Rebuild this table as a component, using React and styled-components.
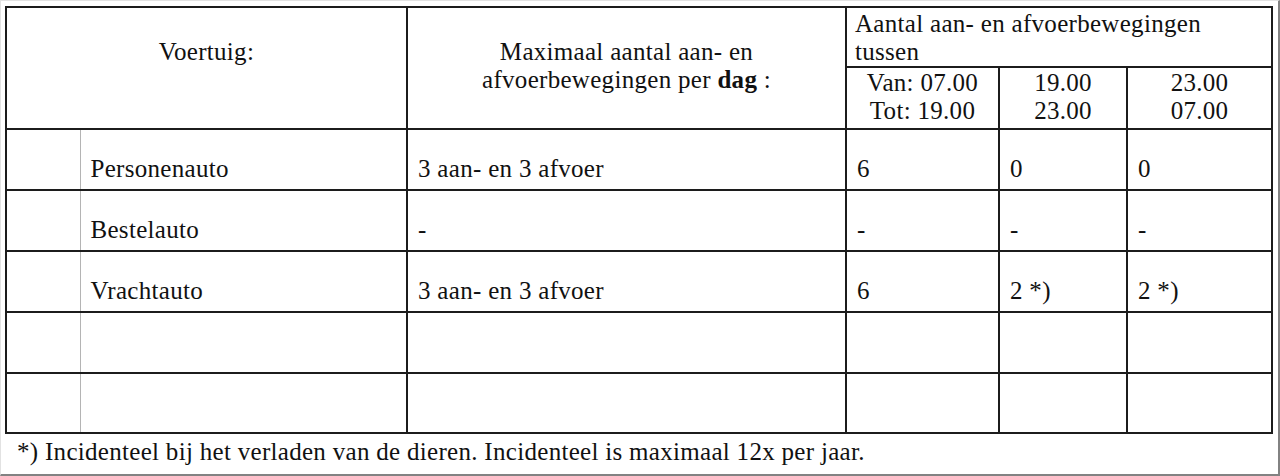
import React from 'react'
import styled, { createGlobalStyle } from 'styled-components'

const GlobalStyle = createGlobalStyle`
  html, body {
    margin: 0;
    padding: 0;
    background: #ffffff;
  }
  body {
    font-family: "Liberation Serif", "Times New Roman", serif;
    color: #111111;
  }
`

const rows = [
  { name: 'Personenauto', max: '3 aan- en 3 afvoer', day: '6', evening: '0', night: '0' },
  { name: 'Bestelauto', max: '-', day: '-', evening: '-', night: '-' },
  { name: 'Vrachtauto', max: '3 aan- en 3 afvoer', day: '6', evening: '2 *)', night: '2 *)' },
  { name: '', max: '', day: '', evening: '', night: '' },
  { name: '', max: '', day: '', evening: '', night: '' },
]

const App = () => {
  return (
    <>
      <GlobalStyle />
      <Frame>
        <Table>
          <colgroup>
            <col style={{ width: 74 }} />
            <col style={{ width: 327 }} />
            <col style={{ width: 439 }} />
            <col style={{ width: 153 }} />
            <col style={{ width: 128 }} />
            <col style={{ width: 145 }} />
          </colgroup>
          <thead>
            <HeadRow>
              <HeadCell colSpan={2} rowSpan={2}>Voertuig:</HeadCell>
              <HeadCell rowSpan={2}>
                Maximaal aantal aan- en
                <br />
                afvoerbewegingen per <b>dag</b> :
              </HeadCell>
              <GroupCell colSpan={3}>
                Aantal aan- en afvoerbewegingen
                <br />
                tussen
              </GroupCell>
            </HeadRow>
            <SubRow>
              <TimeCell>
                Van: 07.00
                <br />
                Tot: 19.00
              </TimeCell>
              <TimeCell>
                19.00
                <br />
                23.00
              </TimeCell>
              <TimeCell>
                23.00
                <br />
                07.00
              </TimeCell>
            </SubRow>
          </thead>
          <tbody>
            {rows.map((r, i) => (
              <BodyRow key={i} $last={i === rows.length - 1}>
                <Cell $indent />
                <Cell $afterIndent>{r.name}</Cell>
                <Cell>{r.max}</Cell>
                <Cell>{r.day}</Cell>
                <Cell>{r.evening}</Cell>
                <Cell>{r.night}</Cell>
              </BodyRow>
            ))}
          </tbody>
        </Table>
        <Note>*) Incidenteel bij het verladen van de dieren. Incidenteel is maximaal 12x per jaar.</Note>
      </Frame>
    </>
  )
}

// styled components
const Frame = styled.div`
  box-sizing: border-box;
  width: 1280px;
  height: 476px;
  padding: 5px 0 0 4px;
  border-top: 1px solid #e2e2e2;
  border-left: 1px solid #e2e2e2;
  border-right: 2px solid #828282;
  border-bottom: 2px solid #828282;
  overflow: hidden;
  letter-spacing: 0.3px;
`

const Table = styled.table`
  border-collapse: collapse;
  table-layout: fixed;
  width: 1268px;
  font-size: 25px;
  line-height: 28px;
  td, th {
    border: 2px solid #1c1c1c;
    padding: 0;
    font-weight: normal;
  }
`

const HeadRow = styled.tr`
  height: 60px;
`

const SubRow = styled.tr`
  height: 62px;
`

const HeadCell = styled.th`
  vertical-align: top;
  text-align: center;
  padding-top: 30px !important;
  b {
    font-weight: bold;
  }
`

const GroupCell = styled.th`
  vertical-align: top;
  text-align: left;
  padding: 2px 8px 0 !important;
`

const TimeCell = styled.th`
  vertical-align: top;
  text-align: center;
  padding-top: 1px !important;
`

const BodyRow = styled.tr`
  height: ${(p) => (p.$last ? '60px' : '61px')};
`

const Cell = styled.td`
  vertical-align: bottom;
  text-align: left;
  padding: 0 10px 6px !important;
  white-space: nowrap;
  ${(p) => p.$indent && 'border-right: 1px solid #b4b4b4 !important;'}
  ${(p) => p.$afterIndent && 'border-left: 1px solid #b4b4b4 !important;'}
`

const Note = styled.div`
  padding: 4px 0 0 12px;
  font-size: 25px;
  line-height: 28px;
`

export default App
